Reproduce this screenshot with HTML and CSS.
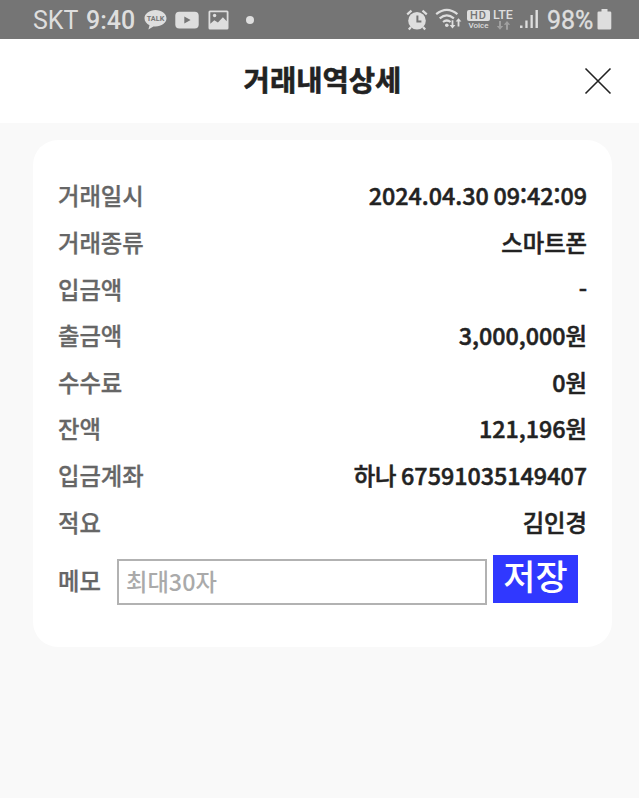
FILE: index.html
```html
<!DOCTYPE html>
<html lang="ko">
<head>
    <meta charset="UTF-8">
    <meta name="viewport" content="width=device-width, initial-scale=1.0">
    <title>거래내역상세</title>
    <link rel="stylesheet" href="styles.css">
</head>
<body>

<div class="status">
    <span class="carrier">SKT</span>
    <span class="time">9:40</span>
    <svg class="talk" width="23" height="22" viewBox="0 0 23 22">
        <path d="M11.5 1C5.400 1 .5 4.700 .5 9.300c0 3 2 5.600 5 7L4.400 20.500l5-3.100c.7.100 1.400.100 2.100.100 6.100 0 11-3.700 11-8.200S17.600 1 11.500 1z"/>
        <text x="11.500" y="12.300" text-anchor="middle" textLength="17.500" lengthAdjust="spacingAndGlyphs">TALK</text>
    </svg>
    <svg class="tube" width="24" height="18" viewBox="0 0 24 18">
        <rect x=".3" y=".8" width="23.400" height="16.600" rx="4"/>
        <path class="dark" d="M9.300 5.500v7l6.300-3.500z"/>
    </svg>
    <svg class="photo" width="21" height="20" viewBox="0 0 21 20">
        <path fill-rule="evenodd" d="M2 .5h17a1.500 1.500 0 0 1 1.500 1.500v16a1.500 1.500 0 0 1-1.500 1.500H2A1.500 1.500 0 0 1 .5 18V2A1.500 1.500 0 0 1 2 .5zM2.300 2.300v11.500l4-3.500 3.600 2.200 5-5.200 3.800 4V2.300z"/>
        <circle cx="6.600" cy="5.500" r="1.700"/>
    </svg>
    <i class="dot"></i>

    <svg class="alarm" width="22" height="22" viewBox="0 0 22 22">
        <circle cx="11" cy="11.800" r="8.800"/>
        <path class="line" d="M1.200 5.400l4.300-3.800M20.800 5.400l-4.300-3.800M5 18l-2.200 2.500M17 18l2.200 2.500"/>
        <path class="hand" d="M11.400 6.500v6h4"/>
    </svg>
    <svg class="wifi" width="28" height="22" viewBox="0 0 28 22">
        <path class="line" d="M1.200 6.200q10.600-8.600 21.200 0M4.700 10.300q7.100-6 14.200 0M8 14q3.800-3 7.600 0"/>
        <circle cx="11.800" cy="17.200" r="1.800"/>
        <path d="M16.600 12.200h1.800v4.900h2l-2.900 3.400-2.900-3.400h2zM22.600 18.500h1.800v-4.900h2l-2.900-3.400-2.900 3.400h2z"/>
    </svg>
    <div class="volte">
        <b>HD</b>
        <span>Voice</span>
    </div>
    <div class="lte">
        <span>LTE</span>
        <svg width="15" height="9" viewBox="0 0 15 9">
            <path d="M3 0h2v5h2.200L4 8.700.8 5H3zM10 8.700h2v-5h2.200L11 0 7.800 3.700H10z"/>
        </svg>
    </div>
    <svg class="signal" width="19" height="20" viewBox="0 0 19 20">
        <path d="M0 16.500h2.500V19H0zM5.300 11.500h2.300V19H5.300zM10.500 6h2.300v13h-2.300zM15.500 1h2.400v18h-2.400z"/>
    </svg>
    <span class="percent">98%</span>
    <svg class="battery" width="15" height="21" viewBox="0 0 15 21">
        <path d="M4.500 0h6v2.500H13a1.300 1.300 0 0 1 1.300 1.300v15.400a1.300 1.300 0 0 1-1.300 1.300H1.800a1.300 1.300 0 0 1-1.300-1.300V3.800a1.300 1.300 0 0 1 1.300-1.300h2.700z"/>
    </svg>
</div>

<div class="header">
    <h1>거래내역상세</h1>
    <a href="#" class="close">
        <svg width="28" height="28" viewBox="0 0 28 28"><path d="M1.500 1.500l25 25M26.500 1.500l-25 25"/></svg>
    </a>
</div>

<div class="card">
    <ul class="list">
        <li><span>거래일시</span><b>2024.04.30 09:42:09</b></li>
        <li><span>거래종류</span><b>스마트폰</b></li>
        <li><span>입금액</span><b>-</b></li>
        <li><span>출금액</span><b>3,000,000원</b></li>
        <li><span>수수료</span><b>0원</b></li>
        <li><span>잔액</span><b>121,196원</b></li>
        <li><span>입금계좌</span><b>하나 67591035149407</b></li>
        <li><span>적요</span><b>김인경</b></li>
    </ul>
    <div class="memo">
        <label for="memo">메모</label>
        <input type="text" id="memo" placeholder="최대30자">
        <button type="button">저장</button>
    </div>
</div>

</body>
</html>
```

FILE: styles.css
```css
* {
    margin: 0;
    padding: 0;
    box-sizing: border-box;
}

body {
    min-height: 798px;
    background-color: #f9f9f9;
    font-family: "Noto Sans CJK KR", sans-serif;
    color: #222;
}

li {
    list-style: none;
}

.status {
    display: flex;
    align-items: center;
    height: 39px;
    padding: 0 27px 0 33px;
    background-color: #757575;
    color: #dedede;
    font-family: Roboto, sans-serif;
    font-size: 25px;
    line-height: 39px;
    white-space: nowrap;
}

.status svg {
    flex: none;
    display: block;
    fill: #dedede;
}

.status .line {
    fill: none;
    stroke: #dedede;
    stroke-width: 2.2;
}

.status .dark {
    fill: #757575;
}

.carrier, .time, .percent {
    padding-top: 1px;
}

.carrier {
    width: 53px;
}

.time {
    width: 58px;
    font-weight: 500;
}

.status .talk text {
    fill: #757575;
    font-size: 8px;
    font-weight: bold;
}

.tube {
    margin-left: 8px;
}

.photo {
    margin-left: 9px;
}

.dot {
    width: 8px;
    height: 8px;
    margin-left: 17px;
    border-radius: 50%;
    background-color: #dedede;
}

.alarm {
    margin-left: auto;
}

.wifi, .signal {
    position: relative;
    top: -1px;
}

.hand {
    fill: none;
    stroke: #757575;
    stroke-width: 2;
}

.wifi {
    margin-left: 7px;
}

.volte {
    width: 23px;
    margin-left: 4px;
    text-align: center;
}

.volte b {
    display: block;
    height: 11px;
    border-radius: 2px;
    background-color: #dedede;
    color: #757575;
    font-size: 11px;
    font-weight: 500;
    line-height: 11px;
    letter-spacing: 1px;
}

.volte span {
    display: block;
    font-size: 8px;
    font-weight: 500;
    line-height: 9px;
}

.lte {
    width: 22px;
    margin-left: 3px;
}

.lte span {
    display: block;
    font-size: 12.5px;
    font-weight: 500;
    line-height: 12px;
}

.status .lte svg {
    margin-left: 3px;
    fill: #a0a0a0;
}

.signal {
    margin-left: 5px;
}

.percent {
    width: 50px;
    margin-left: 8px;
    -webkit-text-stroke: 0.4px #dedede;
}

.header {
    position: relative;
    height: 84px;
    background-color: #fff;
    text-align: center;
}

.header h1 {
    padding-left: 6px;
    font-size: 28.6px;
    font-weight: bold;
    line-height: 80px;
    -webkit-text-stroke: 0.6px #222;
}

.close {
    position: absolute;
    top: 28px;
    right: 27px;
}

.close svg {
    display: block;
    fill: none;
    stroke: #222;
    stroke-width: 1.6;
}

.card {
    width: 579px;
    height: 507px;
    margin: 17px 0 0 33px;
    padding: 32.4px 25px 0;
    border-radius: 25px;
    background-color: #fff;
    font-size: 23.3px;
    font-weight: 500;
}

.list li {
    display: flex;
    justify-content: space-between;
    height: 46.6px;
    line-height: 46.6px;
}

.list span, .memo label {
    color: #666;
    -webkit-text-stroke: 0.3px #666;
}

.list b {
    font-weight: 500;
    word-spacing: -2px;
    -webkit-text-stroke: 0.5px #222;
}

.memo {
    display: flex;
    align-items: center;
    margin-top: 9.6px;
}

.memo label {
    width: 59px;
    margin-top: -2px;
}

.memo input {
    width: 370px;
    height: 46px;
    margin-top: 2px;
    padding: 0 0 2px 7px;
    border: 2px solid #b2b2b2;
    background-color: #fff;
    font: inherit;
}

.memo input::placeholder {
    color: #aaa;
}

.memo button {
    width: 85px;
    height: 48px;
    margin: 0 0 5px 6px;
    padding-bottom: 9px;
    border: none;
    background-color: #3038ff;
    color: #fff;
    font: inherit;
    font-size: 35px;
    line-height: 39px;
}
```
